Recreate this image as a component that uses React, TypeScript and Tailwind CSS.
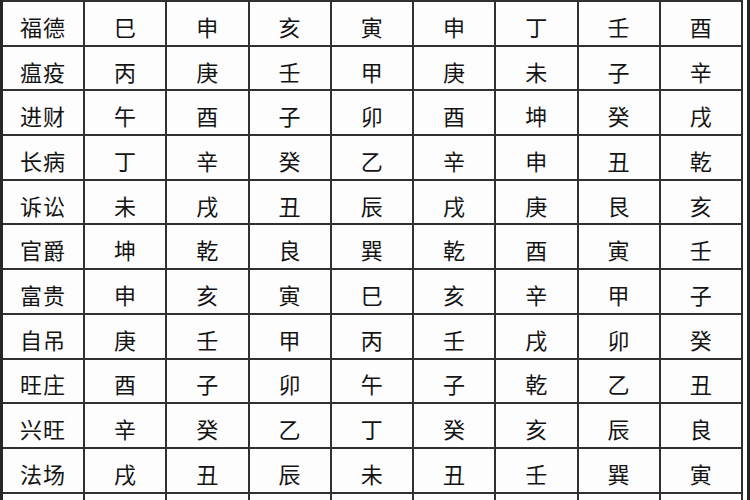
const rows: string[][] = [
  ["福德", "巳", "申", "亥", "寅", "申", "丁", "壬", "酉"],
  ["瘟疫", "丙", "庚", "壬", "甲", "庚", "未", "子", "辛"],
  ["进财", "午", "酉", "子", "卯", "酉", "坤", "癸", "戌"],
  ["长病", "丁", "辛", "癸", "乙", "辛", "申", "丑", "乾"],
  ["诉讼", "未", "戌", "丑", "辰", "戌", "庚", "艮", "亥"],
  ["官爵", "坤", "乾", "良", "巽", "乾", "酉", "寅", "壬"],
  ["富贵", "申", "亥", "寅", "巳", "亥", "辛", "甲", "子"],
  ["自吊", "庚", "壬", "甲", "丙", "壬", "戌", "卯", "癸"],
  ["旺庄", "酉", "子", "卯", "午", "子", "乾", "乙", "丑"],
  ["兴旺", "辛", "癸", "乙", "丁", "癸", "亥", "辰", "良"],
  ["法场", "戌", "丑", "辰", "未", "丑", "壬", "巽", "寅"],
  ["", "", "", "", "", "", "", "", ""],
];

export default function App() {
  return (
    <div className="flex h-[500px] w-[750px] overflow-hidden bg-white font-['Noto_Sans_CJK_SC',sans-serif] text-[#141414]">
      <div className="w-[3px] shrink-0 bg-[#262626]" />
      <div className="grid flex-1 grid-cols-[80px_repeat(8,minmax(0,1fr))] grid-rows-[repeat(12,42.7px)] gap-[2px] self-start bg-[#303030] pr-[2px] pt-[2px]">
        {rows.flatMap((row, r) =>
          row.map((cell, c) => (
            <div
              key={`${r}-${c}`}
              className={`flex items-center justify-center bg-[#fdfdfd] pt-[5px] text-[22px] leading-none ${
                c === 0 ? "tracking-[1px]" : ""
              }`}
            >
              {cell}
            </div>
          ))
        )}
      </div>
      <div className="w-[4px] shrink-0 bg-white" />
      <div className="w-[3px] shrink-0 bg-[#262626]" />
    </div>
  );
}
